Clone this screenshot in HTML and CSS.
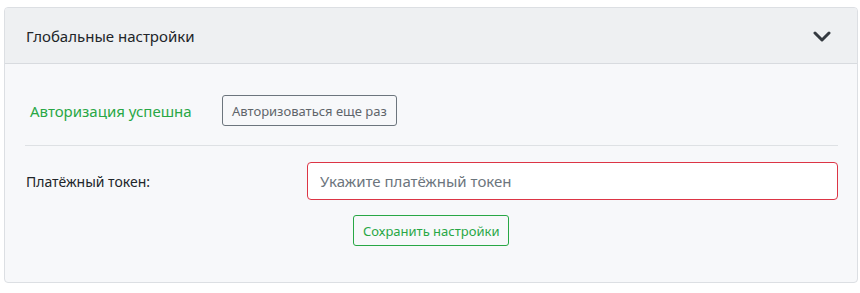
FILE: index.html
```html
<!DOCTYPE html>
<html>
<head>
  <title>Глобальные настройки</title>
  <link rel="stylesheet" href="styles.css">
</head>
<body>
  <div class="card">
    <div class="card-header">
      <span class="card-title">Глобальные настройки</span>
      <svg class="chevron" width="18" height="12" viewBox="0 0 18 12">
        <path d="M2 2 L9 9 L16 2" fill="none" stroke="#343a40" stroke-width="3" stroke-linecap="round" stroke-linejoin="round"/>
      </svg>
    </div>
    <div class="card-body">
      <div class="auth-row">
        <span class="auth-status">Авторизация успешна</span>
        <button class="btn btn-grey">Авторизоваться еще раз</button>
      </div>
      <hr class="divider">
      <div class="token-row">
        <label class="token-label" for="token">Платёжный токен:</label>
        <input type="text" id="token" class="token-input" placeholder="Укажите платёжный токен">
      </div>
      <div class="save-row">
        <button class="btn btn-green">Сохранить настройки</button>
      </div>
    </div>
  </div>
</body>
</html>
```

FILE: styles.css
```css
body {
  margin: 0;
  padding: 7px 2px 0 4px;
  font-family: "Noto Sans", "Open Sans", sans-serif;
  color: #212529;
  background-color: white;
}

.card {
  border: 1px solid #dcdfe3;
  border-radius: 4px;
  background-color: #f7f8fa;
  overflow: hidden;
}

.card-header {
  display: flex;
  align-items: center;
  justify-content: space-between;
  height: 55px;
  padding: 0 26px 0 21px;
  background-color: #eef0f2;
  border-bottom: 1px solid #d8dbdf;
}

.card-title {
  font-size: 15px;
}

.chevron {
  margin-top: 2px;
}

.card-body {
  padding: 31px 19px 36px 20px;
}

.auth-row {
  display: flex;
  align-items: center;
  padding-left: 5px;
}

.auth-status {
  color: #28a745;
  font-size: 15px;
  width: 192px;
}

.btn {
  font-family: inherit;
  font-size: 13px;
  background-color: transparent;
  border-radius: 3px;
  height: 31px;
  padding: 0 9px;
}

.btn-grey {
  border: 1px solid #6c757d;
  color: #5f656b;
}

.btn-green {
  border: 1px solid #28a745;
  color: #28a745;
}

.divider {
  border: none;
  border-top: 1px solid #dee1e4;
  margin: 19px 0 16px 0;
}

.token-row {
  display: flex;
  align-items: center;
}

.token-label {
  font-size: 14px;
  width: 281px;
  padding-left: 1px;
}

.token-input {
  flex: 1;
  height: 38px;
  box-sizing: border-box;
  border: 1px solid #dc3545;
  border-radius: 4px;
  padding: 0 12px;
  font-family: inherit;
  font-size: 15px;
  background-color: white;
}

.token-input::placeholder {
  color: #6c757d;
}

.save-row {
  display: flex;
  padding-left: 328px;
  margin-top: 15px;
}
```
